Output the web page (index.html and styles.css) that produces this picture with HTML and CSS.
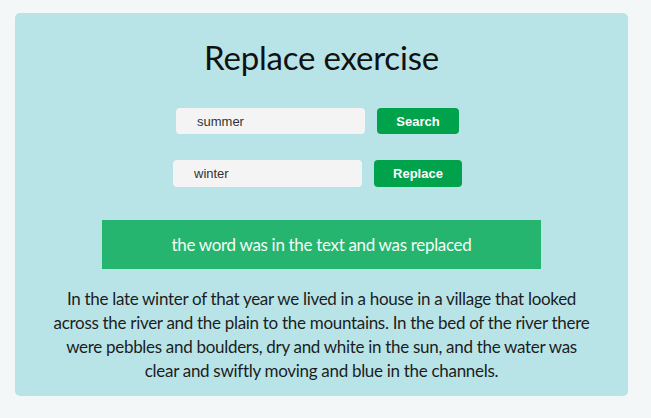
FILE: index.html
```html
<!DOCTYPE html>
<html>
<head>
<meta charset="utf-8">
<link rel="stylesheet" href="styles.css">
</head>
<body>
<main class="card">
  <h1 class="title">Replace exercise</h1>
  <div class="row row-search">
    <input class="field" type="text" value="summer">
    <button class="btn btn-search">Search</button>
  </div>
  <div class="row row-replace">
    <input class="field" type="text" value="winter">
    <button class="btn btn-replace">Replace</button>
  </div>
  <div class="notice">the word was in the text and was replaced</div>
  <p class="text">In the late winter of that year we lived in a house in a village that looked<br>across the river and the plain to the mountains. In the bed of the river there<br>were pebbles and boulders, dry and white in the sun, and the water was<br>clear and swiftly moving and blue in the channels.</p>
</main>
</body>
</html>
```

FILE: styles.css
```css
html, body {
  margin: 0;
  padding: 0;
}
body {
  background: #f3f7f8;
  padding: 13px 23px 0 15px;
  font-family: Lato, "Open Sans", sans-serif;
}
.card {
  background: #b8e4e8;
  border-radius: 5px;
  height: 383px;
  box-sizing: border-box;
  padding-top: 24px;
  display: flex;
  flex-direction: column;
  align-items: center;
}
.title {
  margin: 0;
  font-weight: 400;
  font-size: 33px;
  line-height: 40px;
  color: #111;
  letter-spacing: -0.2px;
}
.row {
  display: flex;
  gap: 12px;
  padding-right: 8px;
}
.row-search {
  margin-top: 31px;
}
.row-replace {
  margin-top: 26px;
}
.field {
  width: 189px;
  height: 26px;
  box-sizing: border-box;
  border: none;
  border-radius: 4px;
  background: #f4f4f4;
  padding: 0 0 0 21px;
  font-family: "Liberation Sans", Arial, sans-serif;
  font-size: 13px;
  color: #333;
  outline: none;
}
.row-replace .field {
  height: 27px;
}
.btn {
  height: 26px;
  border: none;
  border-radius: 4px;
  background: #00a24b;
  color: #fff;
  font-family: "Liberation Sans", Arial, sans-serif;
  font-weight: 700;
  font-size: 13px;
  padding: 0;
}
.btn-search { width: 82px; }
.btn-replace { width: 88px; height: 27px; }
.notice {
  margin-top: 33px;
  width: 439px;
  height: 49px;
  background: #25b56e;
  color: #f2fbf6;
  font-size: 17px;
  line-height: 49px;
  text-align: center;
  letter-spacing: -0.32px;
}
.text {
  margin: 18px 0 0;
  text-align: center;
  font-size: 17px;
  line-height: 24px;
  color: #1d1d1d;
  letter-spacing: -0.3px;
}
```
